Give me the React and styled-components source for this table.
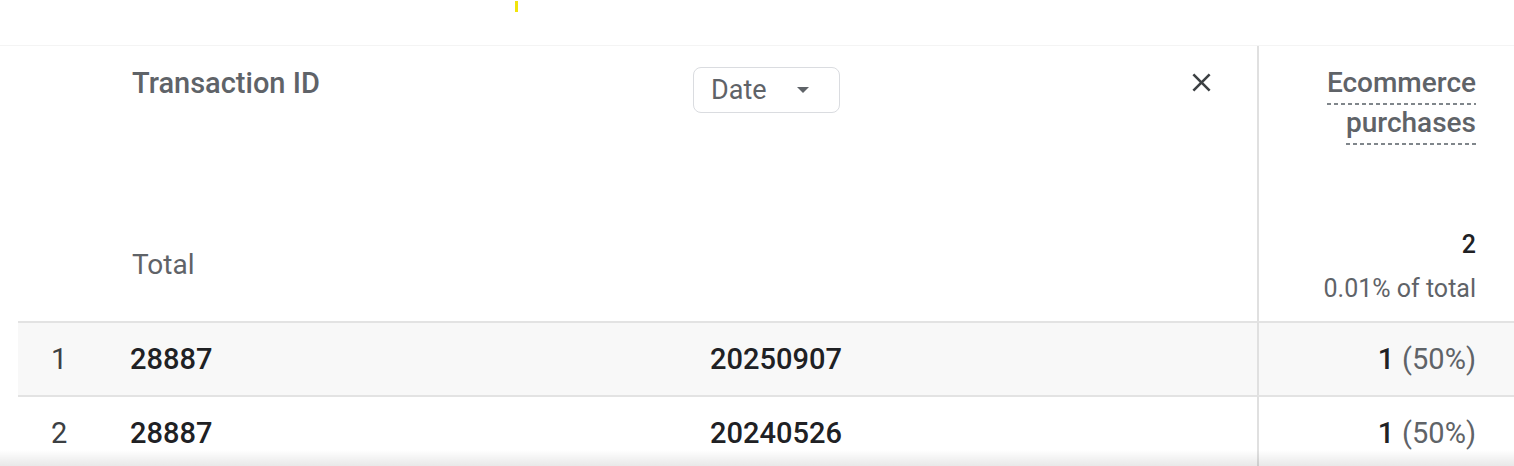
import React from 'react';
import styled, { createGlobalStyle } from 'styled-components';

const GlobalStyle = createGlobalStyle`
  html, body {
    margin: 0;
    padding: 0;
    background: #fff;
    overflow: hidden;
  }
  body {
    font-family: Roboto, "Noto Sans", Arial, sans-serif;
    -webkit-font-smoothing: antialiased;
  }
`;

const Page = styled.div`
  position: relative;
  width: 1514px;
  height: 466px;
  overflow: hidden;
  background: #fff;
`;

const TopStrip = styled.div`
  height: 45px;
  border-bottom: 1px solid #f4f4f4;
`;

const Marker = styled.span`
  position: absolute;
  left: 515px;
  top: 1px;
  width: 3px;
  height: 11px;
  background: #f1e40c;
`;

const BottomShade = styled.div`
  position: absolute;
  left: 0;
  right: 0;
  bottom: 0;
  height: 16px;
  background: linear-gradient(to bottom, rgba(0, 0, 0, 0), rgba(0, 0, 0, 0.09));
  pointer-events: none;
`;

const Table = styled.div`
  margin-left: 18px;
  display: grid;
  grid-template-columns: 112px 563px 564px 1fr;
`;

const HeadCell = styled.div`
  height: 275px;
  box-sizing: border-box;
  display: flex;
  flex-direction: column;
  justify-content: space-between;
  ${(p) => p.$metric && `
    border-left: 2px solid #e0e0e0;
    align-items: flex-end;
    text-align: right;
    padding-right: 38px;
    padding-bottom: 14px;
  `}
  ${(p) => p.$dim && `
    padding: 17px 0 36px 2px;
  `}
`;

const HeadLabel = styled.div`
  font-size: 29px;
  line-height: 40px;
  font-weight: 500;
  color: #5f6368;
`;

const MetricLabel = styled(HeadLabel)`
  font-size: 28px;
  padding-top: 17px;
  width: 160px;
`;

const Dashed = styled.span`
  padding-bottom: 6px;
  background: repeating-linear-gradient(to right, #80868b 0 4px, transparent 4px 7px) left bottom / 100% 2px no-repeat;
  -webkit-box-decoration-break: clone;
  box-decoration-break: clone;
`;

const TotalLabel = styled.div`
  font-size: 28px;
  line-height: 40px;
  font-weight: 400;
  color: #5f6368;
`;

const Totals = styled.div`
  display: flex;
  flex-direction: column;
  align-items: flex-end;
  gap: 8px;
`;

const TotalValue = styled.div`
  font-size: 25px;
  line-height: 36px;
  font-weight: 500;
  color: #202124;
`;

const TotalShare = styled.div`
  font-size: 25px;
  line-height: 36px;
  color: #5f6368;
`;

const DimPicker = styled.div`
  height: 275px;
  box-sizing: border-box;
  display: flex;
  justify-content: space-between;
  align-items: flex-start;
  padding: 21px 40px 0 0;
`;

const Chip = styled.button`
  height: 46px;
  box-sizing: border-box;
  display: flex;
  align-items: center;
  gap: 30px;
  padding: 0 30px 0 17px;
  border: 1.5px solid #dadce0;
  border-radius: 8px;
  background: #fff;
  font-family: inherit;
  font-size: 27px;
  color: #5f6368;
  cursor: pointer;
`;

const Caret = styled.span`
  width: 0;
  height: 0;
  border-left: 6.5px solid transparent;
  border-right: 6.5px solid transparent;
  border-top: 6px solid #5f6368;
`;

const CloseButton = styled.button`
  padding: 0;
  border: 0;
  background: none;
  display: flex;
  cursor: pointer;
`;

const Cell = styled.div`
  height: 74px;
  box-sizing: border-box;
  border-top: 2px solid #e3e3e3;
  background: ${(p) => (p.$shaded ? '#f8f8f8' : '#fff')};
  display: flex;
  align-items: center;
  font-size: 29px;
  color: #202124;
  padding-left: ${(p) => p.$pad || 0}px;
  ${(p) => p.$metric && `
    border-left: 2px solid #e0e0e0;
    justify-content: flex-end;
    padding-right: 38px;
  `}
`;

const Index = styled.span`
  font-weight: 400;
  color: #3c4043;
`;

const Value = styled.span`
  font-weight: 500;
`;

const Share = styled.span`
  font-weight: 400;
  color: #5f6368;
  margin-left: 8px;
`;

const CloseIcon = () => (
  <svg width="31" height="31" viewBox="0 0 24 24">
    <path
      fill="#3c4043"
      d="M19 6.41L17.59 5 12 10.59 6.41 5 5 6.41 10.59 12 5 17.59 6.41 19 12 13.41 17.59 19 19 17.59 13.41 12z"
    />
  </svg>
);

const rows = [
  { id: '28887', date: '20250907', value: 1, share: '50%' },
  { id: '28887', date: '20240526', value: 1, share: '50%' },
];

export default function App() {
  return (
    <Page>
      <GlobalStyle />
      <Marker />
      <TopStrip />
      <Table>
        <HeadCell />
        <HeadCell $dim>
          <HeadLabel>Transaction ID</HeadLabel>
          <TotalLabel>Total</TotalLabel>
        </HeadCell>
        <DimPicker>
          <Chip>
            Date
            <Caret />
          </Chip>
          <CloseButton aria-label="Remove">
            <CloseIcon />
          </CloseButton>
        </DimPicker>
        <HeadCell $metric>
          <MetricLabel>
            <Dashed>Ecommerce purchases</Dashed>
          </MetricLabel>
          <Totals>
            <TotalValue>2</TotalValue>
            <TotalShare>0.01% of total</TotalShare>
          </Totals>
        </HeadCell>

        {rows.map((r, i) => (
          <React.Fragment key={i}>
            <Cell $shaded={i === 0} $pad={33}>
              <Index>{i + 1}</Index>
            </Cell>
            <Cell $shaded={i === 0}>
              <Value>{r.id}</Value>
            </Cell>
            <Cell $shaded={i === 0} $pad={17}>
              <Value>{r.date}</Value>
            </Cell>
            <Cell $shaded={i === 0} $metric>
              <Value>{r.value}</Value>
              <Share>({r.share})</Share>
            </Cell>
          </React.Fragment>
        ))}
      </Table>
      <BottomShade />
    </Page>
  );
}
